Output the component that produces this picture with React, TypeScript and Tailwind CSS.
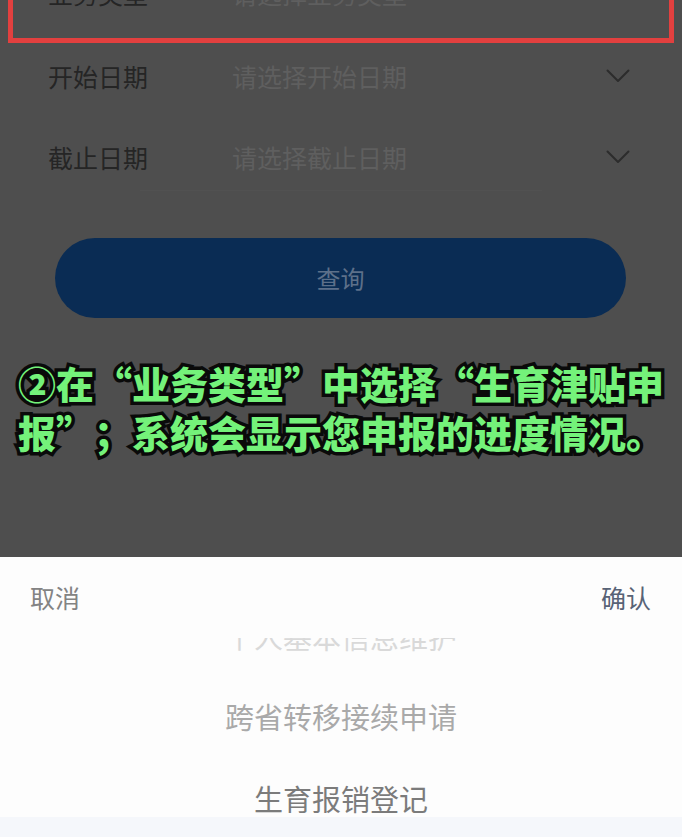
import React from 'react';

const CJK = '[font-family:"Noto_Sans_CJK_SC","Noto_Sans",sans-serif]';

function Chevron() {
  return (
    <svg width="24" height="14" viewBox="0 0 24 14" fill="none" aria-hidden="true">
      <polyline points="1.5,1.5 12,12 22.5,1.5" stroke="#2c2c2c" strokeWidth="2" strokeLinecap="round" strokeLinejoin="round" />
    </svg>
  );
}

interface FieldRowProps {
  label: string;
  placeholder: string;
  className?: string;
}

function FieldRow({ label, placeholder, className = '' }: FieldRowProps) {
  return (
    <div className={`flex items-center ${className}`}>
      <span className="w-[184px] shrink-0 text-[25px] leading-[30px] text-[#252525]">{label}</span>
      <span className="flex-1 text-[25px] leading-[30px] text-[#5f5f5f]">{placeholder}</span>
      <Chevron />
    </div>
  );
}

const pickerItems = [
  { label: '个人基本信息维护', color: 'text-[#d9d9d9]' },
  { label: '跨省转移接续申请', color: 'text-[#a9a9a9]' },
];

export default function App() {
  return (
    <div className={`w-[682px] h-[837px] overflow-hidden flex flex-col ${CJK}`}>
      {/* dimmed form behind the sheet */}
      <div className="h-[557px] shrink-0 bg-[#4e4e4e] overflow-hidden flex flex-col">
        <div className="-mt-[52px] mx-[8px] h-[95px] shrink-0 border-[5px] border-[#e2403f] pl-[35px] pr-[38px] flex items-center">
          <FieldRow label="业务类型" placeholder="请选择业务类型" className="flex-1 mt-[-6px]" />
        </div>
        <FieldRow label="开始日期" placeholder="请选择开始日期" className="h-[66px] shrink-0 pl-[48px] pr-[52px]" />
        <FieldRow label="截止日期" placeholder="请选择截止日期" className="h-[66px] mt-[15px] shrink-0 pl-[48px] pr-[52px]" />
        <div className="mx-[140px] h-px bg-[#515151]" />

        <button className="mt-[47px] ml-[55px] mr-[56px] h-[80px] shrink-0 rounded-full bg-[#0a2c54] text-[24px] text-[#5d708a]">
          查询
        </button>

        <div className="mt-[40px] pl-[18px] pr-[6px] text-[38px] leading-[49px] font-black text-[#74f27a] [paint-order:stroke_fill] [-webkit-text-stroke:7px_#0a0a0a] [text-spacing-trim:space-all]">
          <p>②在“业务类型”中选择“生育津贴申</p>
          <p>报”；系统会显示您申报的进度情况。</p>
        </div>
      </div>

      {/* picker sheet */}
      <div className="flex-1 bg-[#fdfdfd] flex flex-col">
        <div className="h-[81px] shrink-0 flex items-center justify-between pl-[30px] pr-[31px]">
          <button className="text-[25px] text-[#838383]">取消</button>
          <button className="text-[25px] text-[#586376]">确认</button>
        </div>
        <div className="flex-1 overflow-hidden flex flex-col">
          <div className="-mt-[41px] flex flex-col">
            {pickerItems.map((item) => (
              <div key={item.label} className={`h-[80px] shrink-0 flex items-center justify-center text-[29px] ${item.color}`}>
                {item.label}
              </div>
            ))}
            <div className="h-[60px] shrink-0 flex justify-center pt-[24px] text-[29px] leading-[34px] text-[#7b7b7b]">
              生育报销登记
            </div>
          </div>
          <div className="flex-1 bg-[#f5f7fb]" />
        </div>
      </div>
    </div>
  );
}
